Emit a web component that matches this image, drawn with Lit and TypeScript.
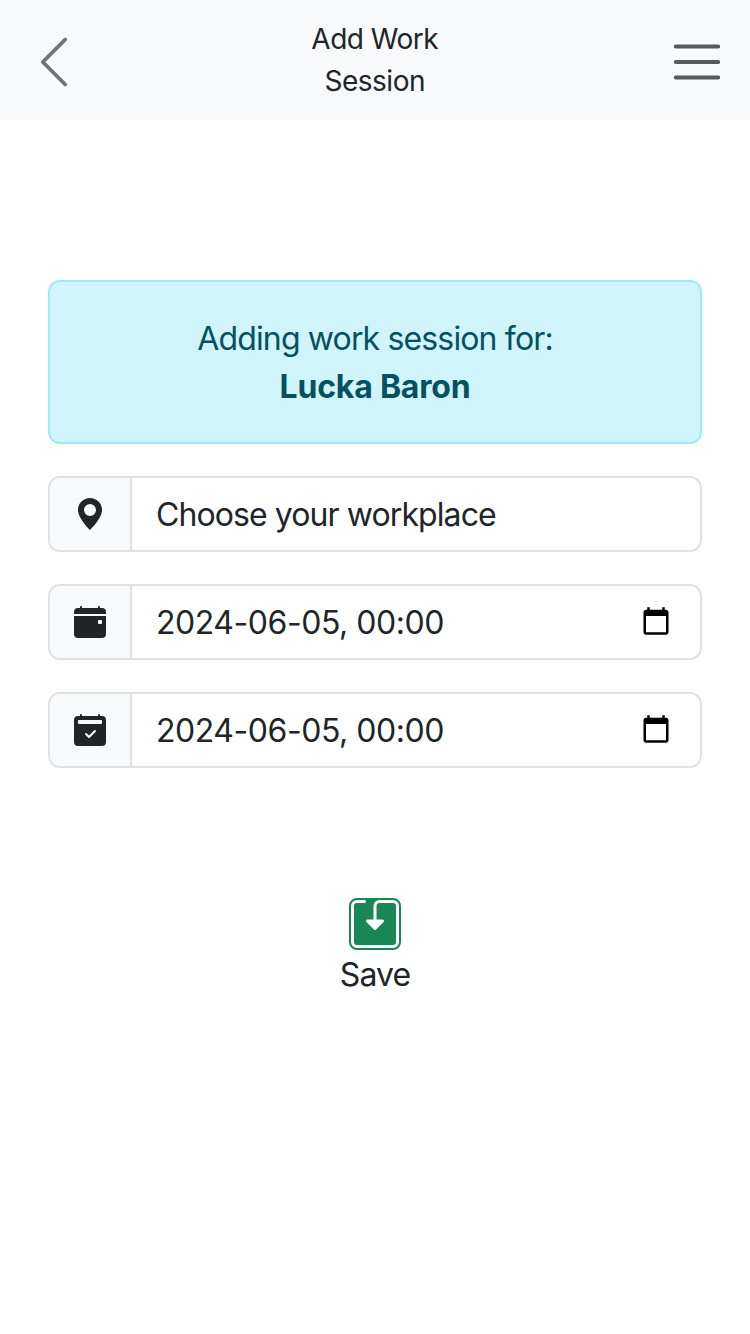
import { LitElement, html, svg, css } from "lit";
import { customElement } from "lit/decorators.js";

const icon = (cls: string, box: number, body: unknown) =>
  html`<svg class=${cls} viewBox="0 0 ${box} ${box}" fill="currentColor" aria-hidden="true">${body}</svg>`;

const chevron = svg`<path d="M11.354 1.646a.5.5 0 0 1 0 .708L5.707 8l5.647 5.646a.5.5 0 0 1-.708.708l-6-6a.5.5 0 0 1 0-.708l6-6a.5.5 0 0 1 .708 0"/>`;
const menu = svg`<path d="M4 7h22M4 15h22M4 23h22" fill="none" stroke="currentColor" stroke-width="2" stroke-linecap="round"/>`;
const pin = svg`<path d="M8 16s6-5.686 6-10A6 6 0 0 0 2 6c0 4.314 6 10 6 10m0-7a3 3 0 1 1 0-6 3 3 0 0 1 0 6"/>`;
const calendarEvent = svg`<path d="M4 .5a.5.5 0 0 0-1 0V1H2a2 2 0 0 0-2 2v1h16V3a2 2 0 0 0-2-2h-1V.5a.5.5 0 0 0-1 0V1H4zM16 14V5H0v9a2 2 0 0 0 2 2h12a2 2 0 0 0 2-2m-3.5-7h1a.5.5 0 0 1 .5.5v1a.5.5 0 0 1-.5.5h-1a.5.5 0 0 1-.5-.5v-1a.5.5 0 0 1 .5-.5"/>`;
const calendarCheck = svg`<path d="M3.5 0a.5.5 0 0 1 .5.5V1h8V.5a.5.5 0 0 1 1 0V1h1a2 2 0 0 1 2 2v11a2 2 0 0 1-2 2H2a2 2 0 0 1-2-2V3a2 2 0 0 1 2-2h1V.5a.5.5 0 0 1 .5-.5m9.954 3H2.545c-.3 0-.545.224-.545.5v1c0 .276.244.5.545.5h10.91c.3 0 .545-.224.545-.5v-1c0-.276-.244-.5-.546-.5m-2.6 5.854a.5.5 0 0 0-.708-.708L7.5 10.793 6.354 9.646a.5.5 0 1 0-.708.708l1.5 1.5a.5.5 0 0 0 .708 0z"/>`;
const picker = svg`<path d="M20 3h-1V1h-2v2H7V1H5v2H4c-1.1 0-2 .9-2 2v16c0 1.1.9 2 2 2h16c1.1 0 2-.9 2-2V5c0-1.1-.9-2-2-2zm0 18H4V8h16v13z"/>`;
const save = svg`<path d="M2 1a1 1 0 0 0-1 1v12a1 1 0 0 0 1 1h12a1 1 0 0 0 1-1V2a1 1 0 0 0-1-1H9.5a1 1 0 0 0-1 1v4.5h2a.5.5 0 0 1 .354.854l-2.5 2.5a.5.5 0 0 1-.708 0l-2.5-2.5A.5.5 0 0 1 5.5 6.5h2V2a2 2 0 0 1 2-2H14a2 2 0 0 1 2 2v12a2 2 0 0 1-2 2H2a2 2 0 0 1-2-2V2a2 2 0 0 1 2-2h2.5a.5.5 0 0 1 0 1z"/>`;

@customElement("app-root")
export class AppRoot extends LitElement {
  static styles = css`
    :host {
      display: block;
      min-height: 1334px;
      background: #fff;
      color: #212529;
      font: 400 32px/48px Inter, "Liberation Sans", sans-serif;
    }
    svg { display: block; flex: none; }
    header {
      display: grid;
      grid-template-columns: 60px 1fr 60px;
      height: 120px;
      box-sizing: border-box;
      padding: 18px 24.5px 0 24px;
      background: #f8f9fa;
    }
    .back { width: 60px; height: 60px; margin-top: 14px; color: #6c757d; }
    .menu { width: 58px; height: 58px; margin-top: 15px; justify-self: end; color: rgba(33, 37, 41, 0.75); }
    .title { text-align: center; font-size: 28px; line-height: 42px; letter-spacing: -0.5px; }
    main { display: flex; flex-direction: column; gap: 32px; padding: 160px 48px 0; }
    .alert {
      box-sizing: border-box;
      height: 164px;
      padding: 33px 32px 31px;
      border: 2px solid #9eeaf9;
      border-radius: 12px;
      background: #cff4fc;
      color: #055160;
      text-align: center;
    }
    .lead { letter-spacing: -0.85px; }
    .name { font-weight: 700; letter-spacing: -0.2px; }
    .field {
      display: flex;
      box-sizing: border-box;
      height: 76px;
      border: 2px solid #dee2e6;
      border-radius: 12px;
      overflow: hidden;
    }
    .addon {
      display: flex;
      align-items: center;
      padding: 0 24px;
      background: #f8f9fa;
      border-right: 2px solid #dee2e6;
    }
    .glyph { width: 32px; height: 32px; }
    .value { display: flex; flex: 1; align-items: center; justify-content: space-between; padding: 2px 29px 0 24px; }
    .place { letter-spacing: -0.91px; }
    .date { letter-spacing: -0.46px; }
    .picker { width: 30px; height: 30px; margin-top: -4px; color: #000; }
    .action { display: flex; flex-direction: column; align-items: center; margin-top: 98px; }
    .button {
      padding: 0;
      border: 2px solid #198754;
      border-radius: 8px;
      background: #198754;
      color: #fff;
    }
    .save { width: 48px; height: 48px; }
    .label { margin-top: 1px; letter-spacing: -0.9px; }
  `;

  private field(glyph: unknown, text: string, cls: string, dated: boolean) {
    return html`<div class="field">
      <div class="addon">${icon("glyph", 16, glyph)}</div>
      <div class="value"><span class=${cls}>${text}</span>${dated ? icon("picker", 24, picker) : ""}</div>
    </div>`;
  }

  render() {
    return html`
      <header>
        ${icon("back", 16, chevron)}
        <div class="title">Add Work<br />Session</div>
        ${icon("menu", 30, menu)}
      </header>
      <main>
        <div class="alert">
          <div class="lead">Adding work session for:</div>
          <div class="name">Lucka Baron</div>
        </div>
        ${this.field(pin, "Choose your workplace", "place", false)}
        ${this.field(calendarEvent, "2024-06-05, 00:00", "date", true)}
        ${this.field(calendarCheck, "2024-06-05, 00:00", "date", true)}
        <div class="action">
          <button class="button" aria-label="Save">${icon("save", 16, save)}</button>
          <span class="label">Save</span>
        </div>
      </main>
    `;
  }
}
